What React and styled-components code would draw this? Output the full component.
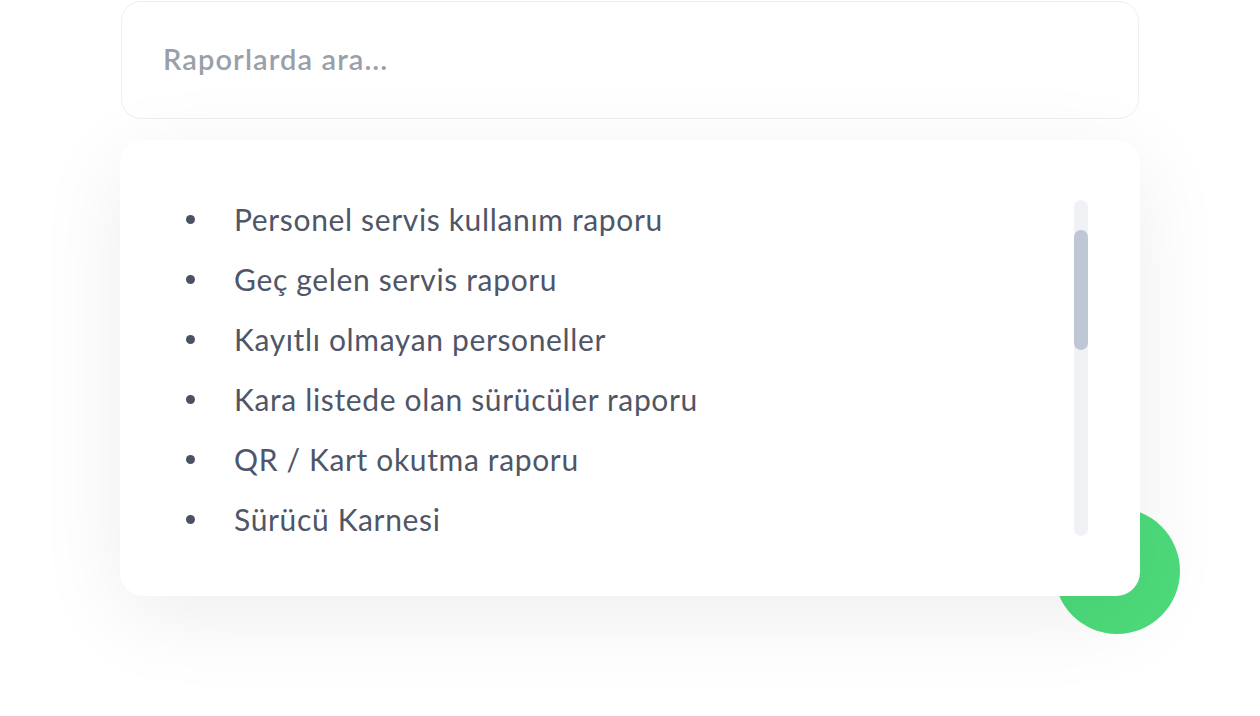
import React from "react";
import styled, { createGlobalStyle } from "styled-components";

const Global = createGlobalStyle`
  html, body { margin: 0; padding: 0; background: #ffffff; }
  body { font-family: Lato, "Noto Sans", sans-serif; }
`;

const Page = styled.div`
  width: 1260px;
  height: 716px;
  overflow: hidden;
  padding: 1px 0 0 121px;
  box-sizing: border-box;
`;

const Column = styled.div`
  width: 1018px;
  display: flex;
  flex-direction: column;
  gap: 21px;
`;

const SearchBox = styled.div`
  height: 118px;
  box-sizing: border-box;
  border: 1.5px solid #eeeff3;
  border-radius: 20px;
  background: #fff;
  display: flex;
  align-items: center;
  padding: 0 40px 4px 41px;
`;

const SearchInput = styled.input`
  border: none;
  outline: none;
  background: transparent;
  width: 100%;
  padding: 0;
  font-family: Lato, sans-serif;
  font-size: 29px;
  font-weight: 600;
  letter-spacing: 1.1px;
  color: #4b5161;
  &::placeholder { color: #9aa0aa; }
`;

const CardWrap = styled.div`
  position: relative;
  margin-left: -1px;
  width: 1020px;
`;

const Blob = styled.div`
  position: absolute;
  width: 126px;
  height: 126px;
  border-radius: 50%;
  background: #4ddb7a;
  right: -40px;
  bottom: -38px;
`;

const Card = styled.div`
  position: relative;
  height: 456px;
  box-sizing: border-box;
  background: #fff;
  border-radius: 24px;
  box-shadow: 0 20px 90px rgba(20, 20, 40, 0.07);
  padding: 59px 52px 0 66px;
  display: flex;
  justify-content: space-between;
`;

const List = styled.ul`
  list-style: none;
  margin: 0;
  padding: 0;
  display: flex;
  flex-direction: column;
  gap: 20px;
`;

const Item = styled.li`
  height: 40px;
  display: flex;
  align-items: center;
  gap: 39px;
  font-size: 30px;
  letter-spacing: 0.65px;
  color: #4f5667;
  &::before {
    content: "";
    width: 9px;
    height: 9px;
    border-radius: 50%;
    background: #4b5263;
    flex: none;
  }
`;

const Track = styled.div`
  width: 14px;
  height: 336px;
  margin-top: 1px;
  border-radius: 7px;
  background: #f1f2f6;
  padding-top: 30px;
  box-sizing: border-box;
`;

const Thumb = styled.div`
  height: 120px;
  border-radius: 7px;
  background: #c0c7d4;
`;

const items = [
  "Personel servis kullanım raporu",
  "Geç gelen servis raporu",
  "Kayıtlı olmayan personeller",
  "Kara listede olan sürücüler raporu",
  "QR / Kart okutma raporu",
  "Sürücü Karnesi",
];

export default function App() {
  return (
    <Page>
      <Global />
      <Column>
        <SearchBox>
          <SearchInput placeholder="Raporlarda ara..." />
        </SearchBox>
        <CardWrap>
          <Blob />
          <Card>
            <List>
              {items.map((t) => (
                <Item key={t}>{t}</Item>
              ))}
            </List>
            <Track>
              <Thumb />
            </Track>
          </Card>
        </CardWrap>
      </Column>
    </Page>
  );
}
